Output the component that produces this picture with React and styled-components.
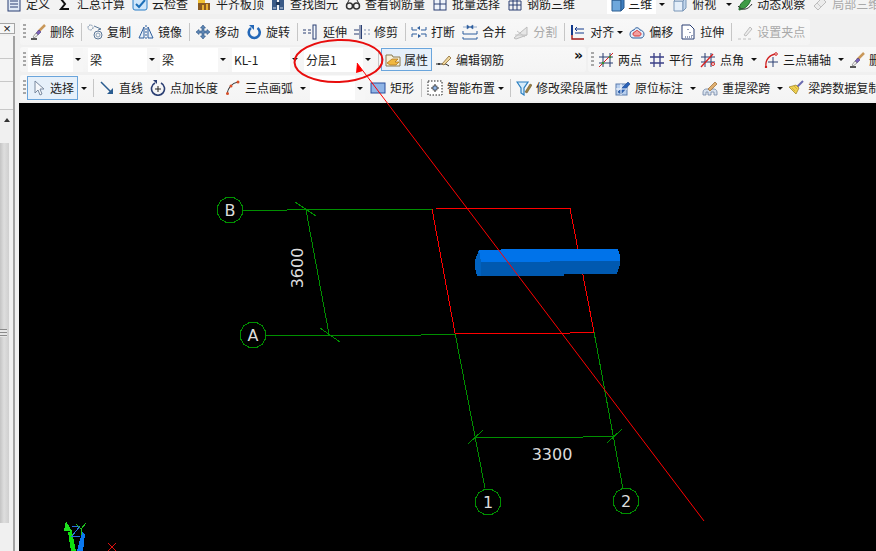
import React from 'react';
import styled, { createGlobalStyle } from 'styled-components';

const GlobalStyle = createGlobalStyle`
  html, body { margin: 0; padding: 0; background: #f0f0f0; }
  body { font-family: 'Noto Sans CJK SC', 'Noto Sans', sans-serif; font-size: 12px; color: #1c1c1c; }
`;

const Page = styled.div`
  position: relative;
  width: 876px;
  height: 551px;
  overflow: hidden;
  background: #f0f0f0;
  display: flex;
  flex-direction: column;
`;

const MenuRow = styled.div`
  flex: none;
  height: 14px;
  padding-left: 6px;
  display: flex;
  align-items: flex-end;
  overflow: hidden;
  background: #f3f3f3;
`;

const Body = styled.div`
  flex: 1;
  min-height: 0;
  display: flex;
`;

const Side = styled.div`
  flex: none;
  width: 19px;
  padding-top: 9px;
  box-sizing: border-box;
  display: flex;
  flex-direction: column;
`;

const CloseBox = styled.div`
  flex: none;
  width: 15px;
  height: 11px;
  box-sizing: border-box;
  border: 1px solid #a5a5a5;
  border-left: none;
  background: #f6f6f6;
  font: 13px/9px 'Liberation Sans', sans-serif;
  text-align: center;
  color: #222;
`;

const SidePanel = styled.div`
  flex: 1;
  width: 13px;
  margin-top: 2px;
  border-right: 2px solid #a2a2a2;
  display: flex;
  flex-direction: column;
`;

const SideTab = styled.div`
  flex: none;
  height: ${({ $h }) => $h}px;
  border-bottom: 1px solid #c8c8c8;
  background: #f4f4f4;
`;

const SideHead = styled.div`
  flex: none;
  height: 33px;
  background: #f0f0f0;
  display: flex;
  justify-content: center;
  padding-top: 8px;
  box-sizing: border-box;
`;

const UpCaret = styled.div`
  width: 0;
  height: 0;
  border: 3px solid transparent;
  border-top: none;
  border-bottom: 4px solid #333;
`;

const Thumb = styled.div`
  flex: 1;
  width: 9px;
  margin-bottom: 28px;
  background: linear-gradient(90deg, #c4c4c4, #dedede 45%, #cfcfcf);
  display: flex;
  align-items: center;
`;

const ThumbGrip = styled.div`
  width: 7px;
  height: 8px;
  background: repeating-linear-gradient(180deg, #8b8b8b 0 1px, #e6e6e6 1px 3px);
`;

const Main = styled.div`
  flex: 1;
  min-width: 0;
  padding-top: 5px;
  display: flex;
  flex-direction: column;
`;

const BarRow = styled.div`
  flex: none;
  height: ${({ $h }) => $h}px;
  margin-top: ${({ $mt }) => $mt || 0}px;
  display: flex;
  gap: 2px;
`;

const Bar = styled.div`
  flex: none;
  margin-left: ${({ $ml }) => $ml || 0}px;
  width: ${({ $w }) => ($w ? `${$w}px` : 'auto')};
  padding-left: 3px;
  box-sizing: border-box;
  border-radius: 3px;
  background: linear-gradient(180deg, #f8f8f8, #f4f4f4);
  display: flex;
  align-items: center;
  white-space: nowrap;
`;

const Grip = styled.div`
  flex: none;
  width: 3px;
  height: 16px;
  margin-right: ${({ $mr }) => $mr}px;
  background: repeating-linear-gradient(180deg, #a8a8a8 0 2px, transparent 2px 4px);
`;

const Tool = styled.div`
  flex: none;
  display: flex;
  align-items: center;
  gap: 4px;
  height: 20px;
  margin-right: ${({ $mr }) => ($mr === undefined ? 7 : $mr)}px;
  color: ${({ $off }) => ($off ? '#a9a9a9' : '#1c1c1c')};
  line-height: 16px;
`;

const ActiveTool = styled.div`
  flex: none;
  display: flex;
  align-items: center;
  gap: 3px;
  padding: 0 3px;
  align-self: stretch;
  margin: 1px ${({ $mr }) => $mr}px 1px 0;
  border: 1px solid #6aa5dc;
  background: #e6f0fa;
  line-height: 16px;
`;

const ViewTool = styled.div`
  flex: none;
  display: flex;
  align-items: center;
  gap: 2px;
  height: 20px;
  width: 49px;
  padding-left: 3px;
  box-sizing: border-box;
  margin-left: ${({ $ml }) => $ml}px;
  background: #fff;
  line-height: 16px;
`;

const Sep = styled.div`
  flex: none;
  width: 1px;
  height: 18px;
  margin-right: ${({ $mr }) => ($mr === undefined ? 5 : $mr)}px;
  background: #c6c6c6;
`;

const Caret = styled.div`
  flex: none;
  width: 0;
  height: 0;
  margin-left: ${({ $ml }) => $ml}px;
  margin-right: ${({ $mr }) => ($mr === undefined ? 6 : $mr)}px;
  margin-bottom: ${({ $mb }) => $mb || 0}px;
  border: 3px solid transparent;
  border-bottom: none;
  border-top: 3px solid #111;
`;

const Combo = styled.div`
  flex: none;
  display: flex;
  width: ${({ $w }) => $w}px;
  height: 24px;
  margin-right: ${({ $mr }) => $mr}px;
  line-height: 24px;
`;

const ComboText = styled.div`
  flex: 1;
  padding-left: 2px;
  background: #fff;
  overflow: hidden;
`;

const ComboButton = styled.div`
  flex: none;
  width: 10px;
  background: #f6f6f6;
  display: flex;
  align-items: center;
  justify-content: center;
`;

const ComboCaret = styled(Caret)`
  margin: 0;
`;

const Chevrons = styled.div`
  margin-left: auto;
  margin-right: 3px;
  margin-bottom: 10px;
  font: bold 14px/12px 'DejaVu Sans', sans-serif;
  color: #111;
`;

const Canvas = styled.div`
  flex: 1;
  min-height: 0;
  margin-top: 2px;
  background: #000;
  overflow: hidden;
`;

const CanvasSvg = styled.svg`
  display: block;
  width: 857px;
  height: 448px;
`;

const CadLabel = styled.text`
  font-family: 'DejaVu Sans', sans-serif;
  font-size: 16px;
  fill: #dcdcdc;
  text-anchor: middle;
`;

const Markup = styled.svg`
  position: absolute;
  left: 0;
  top: 0;
  width: 876px;
  height: 551px;
  pointer-events: none;
`;

const IconSvg = styled.svg`
  flex: none;
  width: 16px;
  height: 16px;
  display: block;
`;

const B = '#2f5f9e';
const N = '#2b3f73';
const GREEN = '#008f00';

const icons = {
  doc: <><rect x="2" y="1" width="12" height="14" fill="#dfe9f6" stroke={N} /><path d="M4 5h8M4 8h8M4 11h8" stroke={N} /></>,
  sigma: <path d="M12 3H4l4 5-4 5h8" fill="none" stroke="#111" strokeWidth="2" />,
  cloud: <><rect x="1" y="2" width="14" height="12" rx="2" fill="#cfe6fa" stroke="#2a7fc8" /><path d="M4 8l3 3 6-7" fill="none" stroke="#1c6fb8" strokeWidth="2" /></>,
  level: <><rect x="2" y="7" width="12" height="7" fill="#8a5a20" /><rect x="2" y="3" width="7" height="4" fill="#f0c030" /><path d="M11 8v6M7 9v5" stroke="#e8b030" strokeWidth="2" /></>,
  find: <><rect x="2" y="3" width="5" height="11" fill="#3a5a86" /><rect x="9" y="3" width="5" height="11" fill="#3a5a86" /><rect x="6" y="6" width="4" height="3" fill="#1d3558" /><path d="M3 12h3M10 12h3" stroke="#cdd9e8" /></>,
  glasses: <><circle cx="4.5" cy="10" r="3" fill="none" stroke="#333" strokeWidth="1.5" /><circle cx="11.5" cy="10" r="3" fill="none" stroke="#333" strokeWidth="1.5" /><path d="M7 9h2M2 8l2-4M14 8l-2-4" stroke="#333" /></>,
  batch: <><rect x="2" y="2" width="12" height="12" fill="#eef3fa" stroke={N} /><path d="M2 8h12M8 2v12" stroke={N} /></>,
  rebar: <><path d="M2 5h12v9H2zM2 9h12M6 2v12M10 2v12" fill="none" stroke={N} /></>,
  cube: <><path d="M2 4h9v11H2z" fill="#6fa8dc" stroke="#2a5c90" /><path d="M2 4l3-3h9l-3 3z" fill="#b8d6f2" stroke="#2a5c90" /><path d="M11 4l3-3v11l-3 3z" fill="#3f7fbe" stroke="#2a5c90" /></>,
  cubeLight: <><path d="M2 5h9v10H2z" fill="#e4eef9" stroke="#7b97b8" /><path d="M2 5l3-3h9l-3 3z" fill="#f5f9fd" stroke="#7b97b8" /><path d="M11 5l3-3v10l-3 3z" fill="#c2d6ec" stroke="#7b97b8" /></>,
  orbit: <><path d="M2 14c0-6 5-11 12-12-1 6-5 11-12 12z" fill="#3f9b46" stroke="#1f6a2a" /><path d="M1 10c4 5 10 4 14-2" fill="none" stroke="#333" /></>,
  local: <><path d="M2 10l8-8 4 4-8 8z" fill="#ececec" stroke="#bdbdbd" /><path d="M5 7l4 4" stroke="#c8c8c8" /></>,

  brush: <><path d="M1 15h6" stroke="#222" strokeWidth="1.5" /><path d="M15 1L8 8" stroke="#c9985a" strokeWidth="2.5" /><path d="M9 6l2 2-3 3-2-2z" fill="#7a62b8" stroke="#4d3d86" strokeWidth=".6" /><path d="M6 9l2 2-4 3-1-1z" fill="#f3f3f3" stroke="#777" strokeWidth=".7" /></>,
  copy: <><circle cx="3.5" cy="3.5" r="2.5" fill="none" stroke="#5c7898" strokeDasharray="1.5 1" /><circle cx="11" cy="11" r="4" fill="none" stroke="#5c7898" /><circle cx="11" cy="11" r="2" fill="none" stroke="#8aa0b8" /><path d="M7 2l7 3-3 1" fill="none" stroke="#5c7898" /></>,
  mirror: <><path d="M6 3L1 14h5z" fill="#e8f0f8" stroke={B} /><path d="M10 3l5 11h-5z" fill="#e8f0f8" stroke={B} /><path d="M8 1v15" stroke={B} strokeDasharray="2 1" /></>,
  move: <path d="M8 1l2.5 3H9v3h3V5.500l3 2.500-3 2.500V9H9v3h1.500L8 15l-2.500-3H7V9H4v1.500L1 8l3-2.500V7h3V4H5.500z" fill="#5e86b4" stroke="#2c5484" strokeWidth=".6" />,
  rotate: <><path d="M5 4a5.500 5.500 0 1 0 6.500 0" fill="none" stroke="#2468b8" strokeWidth="2.600" /><path d="M3 1h5v5z" fill="#2468b8" /></>,
  extend: <><rect x="10" y="1" width="3" height="14" fill="#f4f8fc" stroke={N} /><path d="M0 6h3M0 9h3M5 6h3M5 9h3" stroke={N} strokeWidth="1.200" /></>,
  trim: <><path d="M6 1v14M7.500 1v14" stroke={N} /><path d="M0 6h5M0 10h5" stroke={N} /><path d="M10 6h2M10 10h2M14 6h2M14 10h2" stroke="#7e8fb0" /></>,
  breakIt: <><path d="M1 3v3h5M15 3v3h-5M1 13v-3h5M15 13v-3h-5" fill="none" stroke={B} /><path d="M3 8h10" stroke="#fff" /><path d="M6 4l3-2v4zM10 12l-3-2v4z" fill={B} /></>,
  merge: <><path d="M1 7v3h14V7M1 13v2h14v-2" fill="none" stroke={B} /><path d="M1 3h4M15 3h-4M5 1l3 2-3 2zM11 1L8 3l3 2z" fill={B} stroke={B} strokeWidth=".5" /></>,
  split: <><path d="M1 14L14 3v8L3 15z" fill="#e6e6e6" stroke="#bcbcbc" /><path d="M4 7l8 6M2 11h12" stroke="#c4c4c4" /></>,
  align: <><path d="M2 1v14h12" fill="none" stroke="#a01a1a" strokeWidth="1.400" /><path d="M2 1v10" stroke="#123a8c" strokeWidth="2" /><path d="M5 9h9M5 5h9M5 5l2-2M5 5l2 2" fill="none" stroke="#123a8c" /></>,
  offset: <><path d="M1 10c0-3 3-4 4-4 1-3 5-3 6 0 2 0 4 2 4 4s-1 4-3 4H4c-2 0-3-2-3-4z" fill="#e0ecf8" stroke="#2f5f9e" /><path d="M4 10c0-2 2-2 2-2 1-2 3-2 4 0 1 0 2 1 2 2s-1 2-2 2H6c-1 0-2-1-2-2z" fill="#f2a0a0" stroke="#d83030" /></>,
  stretch: <><path d="M2 1h8l4 4v10H2z" fill="#fff" stroke={N} /><path d="M8 5v1M10 8v1M12 11v1M5 13h8" stroke={N} strokeDasharray="1 1" /></>,
  gripPoint: <><path d="M1 15h14" stroke="#c0c0c0" strokeDasharray="3 2" /><path d="M7 11l6-8 2 2-6 7z" fill="#ececec" stroke="#bdbdbd" /></>,

  attr: <><path d="M1 3h6l1 2h7v9H1z" fill="#f6f0d8" stroke="#8a7a50" /><path d="M2 11l5-4h6l-3 3h4l-3 3H5z" fill="#f0b840" stroke="#a8701c" strokeWidth=".7" /></>,
  editBar: <><path d="M0 12h10l3 2" fill="none" stroke="#222" /><circle cx="3" cy="12" r="1" fill="#222" /><path d="M6 12l7-8 2 2-7 7z" fill="#f0d8a0" stroke="#8a6a30" strokeWidth=".8" /></>,
  twoPoint: <><path d="M5 1v14M12 1v14M1 5h14M1 11h14" stroke={N} /><path d="M1 15L15 1" stroke="#d82020" /><circle cx="5" cy="11" r="1.300" fill="#3a8a30" /><circle cx="12" cy="5" r="1.300" fill="#3a8a30" /></>,
  parallel: <path d="M5 1v14M11 1v14M1 5h14M1 11h14" stroke="#3a3f86" strokeWidth="1.300" />,
  pointAngle: <><path d="M5 1v14M11 1v14M1 5h14M1 10h14" stroke={N} /><path d="M1 15L13 2" stroke="#d82020" strokeWidth="1.300" /><circle cx="13" cy="12" r="1.500" fill="none" stroke="#d82020" /></>,
  arcAxis: <><path d="M3 15C2 8 6 3 13 2" fill="none" stroke="#d02020" strokeWidth="1.300" /><circle cx="13" cy="2" r="1.300" fill="#fff" stroke="#d02020" /><circle cx="3" cy="15" r="1.200" fill="#d02020" /><path d="M10 5v10M5 10h10" stroke={N} /></>,

  cursor: <path d="M4 1v12l3-3 2 5 2-1-2-5h4z" fill="#f6f8fb" stroke="#7a8aa0" />,
  line: <><path d="M2 2l11 11" stroke="#2a5c90" strokeWidth="1.500" /><path d="M14 14H8l6-6z" fill="#2a5c90" /></>,
  pointLen: <><path d="M5 3a6.500 6.500 0 1 0 6 0" fill="none" stroke="#2b3f73" strokeWidth="1.600" /><path d="M8 6v6M5 9h6" stroke="#222" /><path d="M3 0h4v4z" fill="#2b3f73" /></>,
  arc: <><path d="M2 14C3 8 7 3 13 2" fill="none" stroke="#333" strokeWidth="1.200" /><circle cx="2.500" cy="13.500" r="1.500" fill="#d8502a" /><circle cx="6" cy="6" r="1.500" fill="#d8502a" /><circle cx="13" cy="2" r="1.500" fill="#d8502a" /></>,
  rect: <rect x="1" y="3" width="14" height="10" fill="#8fb4e6" stroke="#2a4f9c" />,
  smart: <><rect x="1" y="1" width="14" height="14" fill="#fff" stroke="#222" strokeDasharray="1.500 1.500" /><path d="M8 4v8M4 8h8" stroke="#222" /><rect x="6" y="6" width="4" height="4" fill="#8fb4e6" stroke="#222" strokeWidth=".6" /></>,
  funnel: <><path d="M1 2h11L8 8v7L5 13V8z" fill="#d6ecfa" stroke="#2a7fc0" strokeWidth="1.200" /><path d="M9 12l5-8 2 1-5 8z" fill="#9a8040" stroke="#5e4a20" strokeWidth=".5" /></>,
  origin: <><rect x="1" y="4" width="11" height="11" fill="#b8cfee" stroke="#5a7cae" /><path d="M3 12L13 2l2 2L6 14z" fill="#2a62b8" stroke="#1c4484" strokeWidth=".6" /><path d="M1 9h11M6 4v11" stroke="#fff" /></>,
  respan: <><path d="M1 15v-3c0-2 2-3 3-3h8c1 0 3 1 3 3v3h-3v-3H9v3H6v-3H4v3z" fill="#d8e2ee" stroke="#7286a4" strokeWidth=".8" /><path d="M6 9l7-7 2 2-7 7z" fill="#e0b070" stroke="#9a6a30" strokeWidth=".7" /></>,
  broom: <><path d="M15 1L9 7" stroke="#6a6ab0" strokeWidth="2" /><path d="M8 5l3 3-3 6-7-7z" fill="#f0d050" stroke="#9a8020" strokeWidth=".7" /><path d="M4 8l3 3M6 6l3 3" stroke="#b89a30" strokeWidth=".6" /></>,
};

function Icon({ name }) {
  return <IconSvg viewBox="0 0 16 16">{icons[name]}</IconSvg>;
}

function Item({ icon, label, mr, off }) {
  return (
    <Tool $mr={mr} $off={off}>
      <Icon name={icon} />
      <span>{label}</span>
    </Tool>
  );
}

function Dropdown({ text, w, mr }) {
  return (
    <Combo $w={w} $mr={mr}>
      <ComboText>{text}</ComboText>
      <ComboButton><ComboCaret /></ComboButton>
    </Combo>
  );
}

// grid bubble on the drawing, 12 sided like the CAD circle
function Bubble({ cx, cy, label }) {
  const pts = Array.from({ length: 12 }, (_, i) => {
    const a = (i * Math.PI) / 6 + Math.PI / 12;
    return `${(cx + 13 * Math.cos(a)).toFixed(1)},${(cy + 13 * Math.sin(a)).toFixed(1)}`;
  }).join(' ');
  return (
    <>
      <polygon points={pts} fill="none" stroke={GREEN} shapeRendering="crispEdges" />
      <CadLabel x={cx} y={cy + 6}>{label}</CadLabel>
    </>
  );
}

const greenLines = [
  [243, 210, 287, 210], [287, 209.500, 432, 209.500], [295, 202, 316, 216],
  [306, 210, 329, 334], [320, 328, 340, 342], [266, 335, 421, 335], [421, 334, 455, 334],
  [455, 333, 485, 488], [594, 332, 623, 489], [475, 437, 583, 437], [583, 436, 614, 436],
  [468, 444, 483, 430], [607, 443, 622, 429],
];

const redLines = [
  [432, 209, 455, 333], [436, 208.500, 570, 208.500], [570, 208.500, 594, 332],
  [455, 333.500, 570, 333.500], [570, 332.500, 594, 332.500],
];

function CadDrawing() {
  return (
    <CanvasSvg viewBox="19 103 857 448">
      <g shapeRendering="crispEdges">
        {greenLines.map(([x1, y1, x2, y2], i) => (
          <line key={i} x1={x1} y1={y1} x2={x2} y2={y2} stroke={GREEN} />
        ))}
        {redLines.map(([x1, y1, x2, y2], i) => (
          <line key={i} x1={x1} y1={y1} x2={x2} y2={y2} stroke="#f00" />
        ))}
        <path d="M479 250h22v-1h117l2 7v5l-98 1h-42z" fill="#0073ea" />
        <path d="M480 262l140-1v3l-3 10h-53v2H477l-1-14z" fill="#0059b0" />
        <path d="M479 250l2 12v14h-4l-2-8v-7l2-6z" fill="#0062c0" />
      </g>
      <Bubble cx={230} cy={210} label="B" />
      <Bubble cx={253} cy={335} label="A" />
      <Bubble cx={488} cy={502} label="1" />
      <Bubble cx={626} cy={501} label="2" />
      <CadLabel x={552} y={460}>3300</CadLabel>
      <CadLabel transform="translate(303 268) rotate(-90)">3600</CadLabel>
      <g shapeRendering="crispEdges">
        <path d="M66 521l6 10-8 0z" fill="#1fe01f" />
        <path d="M68 532l4-1 4 20h-5z" fill="#0fe00f" />
        <path d="M82 532l3 2-2 17h-6z" fill="#0a78f0" />
        <path d="M72 526h8l-8 10h8" fill="none" stroke="#2a70e0" />
        <path d="M76 524l5 5 5-6M81 529v6" fill="none" stroke="#1fc01f" />
        <path d="M108 543l8 8M116 543l-8 8" stroke="#e01010" />
      </g>
    </CanvasSvg>
  );
}

export default function App() {
  return (
    <>
      <GlobalStyle />
      <Page>
        <MenuRow>
          <Item icon="doc" label="定义" />
          <Item icon="sigma" label="汇总计算" />
          <Item icon="cloud" label="云检查" mr={8} />
          <Item icon="level" label="平齐板顶" mr={6} />
          <Item icon="find" label="查找图元" />
          <Item icon="glasses" label="查看钢筋量" />
          <Item icon="batch" label="批量选择" />
          <Item icon="rebar" label="钢筋三维" mr={0} />
          <ViewTool $ml={32}><Icon name="cube" /><span>三维</span></ViewTool>
          <Caret $ml={3} $mr={7} $mb={8} />
          <Item icon="cubeLight" label="俯视" mr={5} />
          <Caret $ml={5} $mr={5} $mb={8} />
          <Item icon="orbit" label="动态观察" />
          <Item icon="local" label="局部三维" mr={0} off />
        </MenuRow>
        <Body>
          <Side>
            <CloseBox>×</CloseBox>
            <SidePanel>
              <SideTab $h={22} />
              <SideTab $h={22} />
              <SideTab $h={27} />
              <SideHead><UpCaret /></SideHead>
              <Thumb><ThumbGrip /></Thumb>
            </SidePanel>
          </Side>
          <Main>
            <BarRow $h={26}>
              <Bar $ml={1}>
                <Grip $mr={4} />
                <Item icon="brush" label="删除" />
                <Sep />
                <Item icon="copy" label="复制" />
                <Item icon="mirror" label="镜像" />
                <Sep />
                <Item icon="move" label="移动" />
                <Item icon="rotate" label="旋转" />
                <Sep />
                <Item icon="extend" label="延伸" />
                <Item icon="trim" label="修剪" />
                <Sep />
                <Item icon="breakIt" label="打断" />
                <Item icon="merge" label="合并" />
                <Item icon="split" label="分割" off />
                <Sep />
                <Tool $mr={0}><Icon name="align" /><span>对齐</span></Tool>
                <Caret $ml={3} />
                <Item icon="offset" label="偏移" />
                <Item icon="stretch" label="拉伸" />
                <Sep />
                <Item icon="gripPoint" label="设置夹点" mr={5} off />
              </Bar>
            </BarRow>
            <BarRow $h={25} $mt={2}>
              <Bar $ml={1} $w={566}>
                <Grip $mr={2} />
                <Dropdown text="首层" w={55} mr={5} />
                <Dropdown text="梁" w={69} mr={3} />
                <Dropdown text="梁" w={68} mr={4} />
                <Dropdown text="KL-1" w={68} mr={4} />
                <Dropdown text="分层1" w={69} mr={5} />
                <Sep $mr={2} />
                <ActiveTool $mr={4}><Icon name="attr" /><span>属性</span></ActiveTool>
                <Tool $mr={0}><Icon name="editBar" /><span>编辑钢筋</span></Tool>
                <Chevrons>»</Chevrons>
              </Bar>
              <Bar>
                <Grip $mr={4} />
                <Item icon="twoPoint" label="两点" />
                <Item icon="parallel" label="平行" />
                <Tool $mr={0}><Icon name="pointAngle" /><span>点角</span></Tool>
                <Caret $ml={7} />
                <Tool $mr={0}><Icon name="arcAxis" /><span>三点辅轴</span></Tool>
                <Caret $ml={7} $mr={5} />
                <Item icon="brush" label="删除" mr={0} />
              </Bar>
            </BarRow>
            <BarRow $h={26} $mt={3}>
              <Bar $ml={1}>
                <Grip $mr={1} />
                <ActiveTool $mr={0}><Icon name="cursor" /><span>选择</span></ActiveTool>
                <Caret $ml={3} />
                <Sep />
                <Item icon="line" label="直线" />
                <Item icon="pointLen" label="点加长度" />
                <Tool $mr={0}><Icon name="arc" /><span>三点画弧</span></Tool>
                <Caret $ml={7} $mr={4} />
                <Dropdown text="" w={55} mr={5} />
                <Item icon="rect" label="矩形" />
                <Sep />
                <Tool $mr={0}><Icon name="smart" /><span>智能布置</span></Tool>
                <Caret $ml={3} />
                <Sep />
                <Item icon="funnel" label="修改梁段属性" />
                <Tool $mr={0}><Icon name="origin" /><span>原位标注</span></Tool>
                <Caret $ml={7} />
                <Tool $mr={0}><Icon name="respan" /><span>重提梁跨</span></Tool>
                <Caret $ml={7} $mr={5} />
                <Item icon="broom" label="梁跨数据复制" mr={0} />
              </Bar>
            </BarRow>
            <Canvas><CadDrawing /></Canvas>
          </Main>
        </Body>
        <Markup viewBox="0 0 876 551">
          <path d="M357 63L704 521" stroke="#f00" fill="none" />
          <path d="M357 63l6 8-7 2z" fill="#f00" />
          <ellipse cx="338.500" cy="61" rx="44" ry="21" fill="none" stroke="#e80d0d" strokeWidth="2" transform="rotate(-2 338 61)" />
        </Markup>
      </Page>
    </>
  );
}
